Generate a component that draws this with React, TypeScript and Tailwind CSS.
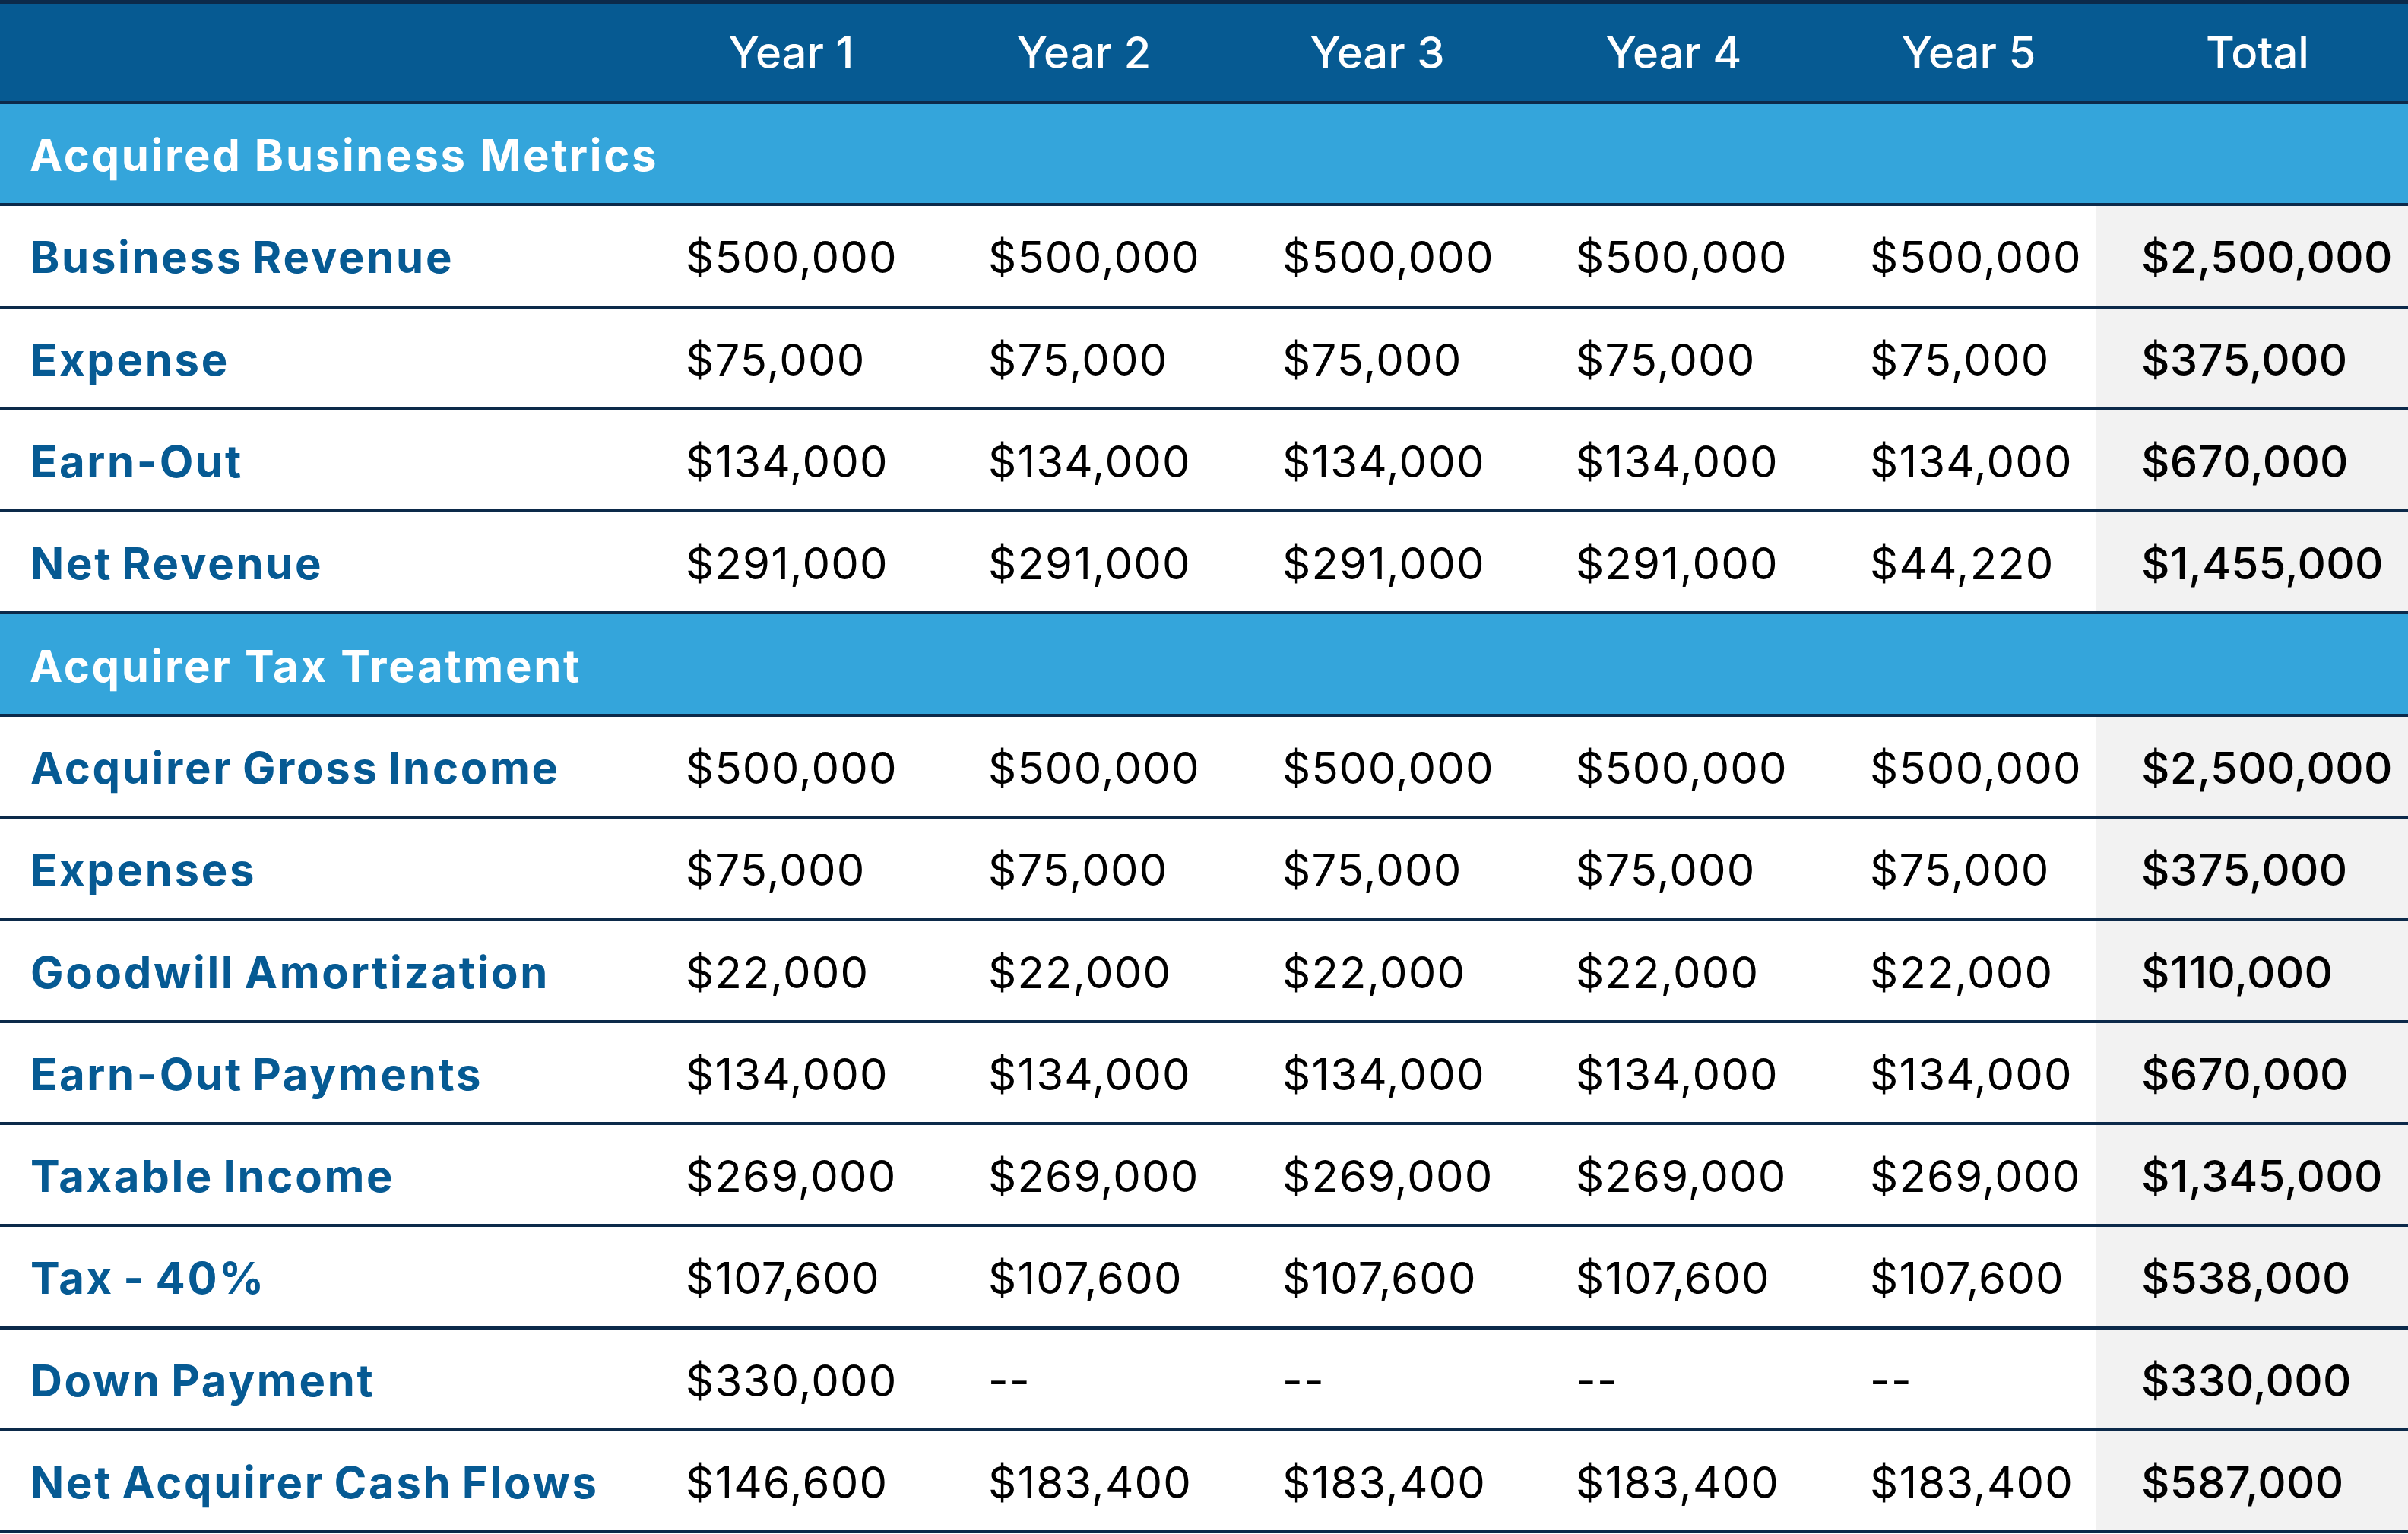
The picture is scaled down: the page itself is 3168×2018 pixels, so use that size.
const years = ["Year 1", "Year 2", "Year 3", "Year 4", "Year 5", "Total"]

type Row = { label: string; values: string[] }

const businessRows: Row[] = [
  { label: "Business Revenue", values: ["$500,000", "$500,000", "$500,000", "$500,000", "$500,000", "$2,500,000"] },
  { label: "Expense", values: ["$75,000", "$75,000", "$75,000", "$75,000", "$75,000", "$375,000"] },
  { label: "Earn-Out", values: ["$134,000", "$134,000", "$134,000", "$134,000", "$134,000", "$670,000"] },
  { label: "Net Revenue", values: ["$291,000", "$291,000", "$291,000", "$291,000", "$44,220", "$1,455,000"] },
]

const taxRows: Row[] = [
  { label: "Acquirer Gross Income", values: ["$500,000", "$500,000", "$500,000", "$500,000", "$500,000", "$2,500,000"] },
  { label: "Expenses", values: ["$75,000", "$75,000", "$75,000", "$75,000", "$75,000", "$375,000"] },
  { label: "Goodwill Amortization", values: ["$22,000", "$22,000", "$22,000", "$22,000", "$22,000", "$110,000"] },
  { label: "Earn-Out Payments", values: ["$134,000", "$134,000", "$134,000", "$134,000", "$134,000", "$670,000"] },
  { label: "Taxable Income", values: ["$269,000", "$269,000", "$269,000", "$269,000", "$269,000", "$1,345,000"] },
  { label: "Tax - 40%", values: ["$107,600", "$107,600", "$107,600", "$107,600", "$107,600", "$538,000"] },
  { label: "Down Payment", values: ["$330,000", "--", "--", "--", "--", "$330,000"] },
  { label: "Net Acquirer Cash Flows", values: ["$146,600", "$183,400", "$183,400", "$183,400", "$183,400", "$587,000"] },
]

function SectionRow({ title }: { title: string }) {
  return (
    <div className="h-[130.3px] box-content flex items-center bg-[#34a5db] border-b-4 border-[#0c2a4a] pl-[39px]">
      <span className="text-white text-[58px] font-bold tracking-[2.7px] pt-[4px]">{title}</span>
    </div>
  )
}

function DataRow({ row }: { row: Row }) {
  return (
    <div className="h-[130.3px] grid grid-cols-[842px_398px_387px_386px_387px_357px_411px] border-b-4 border-[#0c2a4a] box-content">
      <div className="flex items-center pt-[4px] pl-[40px] text-[#065a93] text-[58px] font-bold tracking-[2.7px] [word-spacing:-4px]">
        {row.label}
      </div>
      {row.values.map((v, i) => (
        <div
          key={i}
          className={
            i === 5
              ? "flex items-center pt-[4px] pl-[60px] bg-[#f2f2f2] text-black text-[58px] font-medium tracking-[0.3px]"
              : "flex items-center pt-[4px] pl-[60px] text-black text-[58px] font-normal tracking-[1.2px]"
          }
        >
          {v}
        </div>
      ))}
    </div>
  )
}

export default function App() {
  return (
    <div className="w-[3168px] h-[2018px] bg-white font-['Inter',sans-serif] leading-none">
      <div className="border-t-[5px] border-[#0c2a4a]">
        {/* Header */}
        <div className="h-[128px] grid grid-cols-[842px_398px_372px_400px_380px_396px_364px] bg-[#065a92] border-b-4 border-[#0c2a4a] box-content">
          <div />
          {years.map((y) => (
            <div key={y} className="flex items-center justify-center text-white text-[58px] font-medium">
              {y}
            </div>
          ))}
        </div>

        <SectionRow title="Acquired Business Metrics" />
        {businessRows.map((r) => (
          <DataRow key={r.label} row={r} />
        ))}

        <SectionRow title="Acquirer Tax Treatment" />
        {taxRows.map((r) => (
          <DataRow key={r.label} row={r} />
        ))}
      </div>
    </div>
  )
}
